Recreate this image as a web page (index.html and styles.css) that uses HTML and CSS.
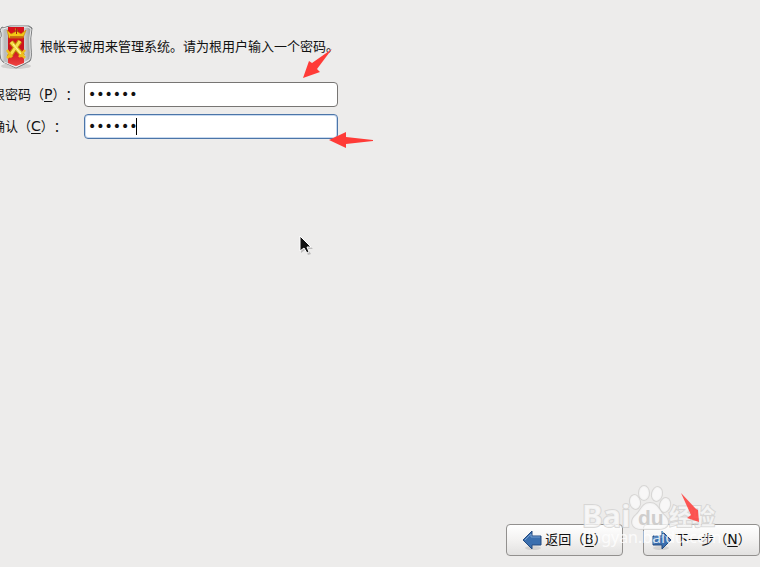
FILE: index.html
```html
<!DOCTYPE html>
<html lang="zh-CN">
<head>
<meta charset="utf-8">
<title>根密码</title>
<link rel="stylesheet" href="styles.css">
</head>
<body>
<form class="page">
  <header class="intro">
    <svg class="shield" width="36" height="46" viewBox="0 0 36 46" aria-hidden="true">
      <defs>
        <linearGradient id="silver" x1="0" y1="0" x2="1" y2="0"><stop offset="0" stop-color="#f4f4f4"/><stop offset=".15" stop-color="#b9babb"/><stop offset=".7" stop-color="#dededf"/><stop offset="1" stop-color="#8f9091"/></linearGradient>
        <linearGradient id="red" x1="0" y1="0" x2="0" y2="1"><stop offset="0" stop-color="#d8101c"/><stop offset=".6" stop-color="#c9141c"/><stop offset="1" stop-color="#f04340"/></linearGradient>
      </defs>
      <ellipse cx="16" cy="42" rx="15" ry="3" fill="#000" opacity=".12"/>
      <path d="M2 3Q4 5 6 3L10 2H29L32 4Q30 14 31 24T30 37Q23 41 16 44Q10 41 3 38Q0 36 0 30V14Q2 13 1 9L0 6Z" fill="url(#silver)" stroke="#77797a"/>
      <path d="M3 5L6 4Q10 3 12 3H28L31 5Q29 14 30 24T29 36L16 43L4 38" fill="none" stroke="#fff" opacity=".8"/>
      <path d="M8 3H24V39L16 42L8 39Z" fill="url(#red)"/>
      <path d="M7 6L11 10L15 8L16 4L18 8L21 10L26 6L23 14H9Z" fill="#f4c816" stroke="#c88b08" stroke-width=".7"/>
      <path d="M16.5 4V10M14 7H19M10 13H23" stroke="#a72513"/>
      <path d="M11 18L23 32M20 17L9 33" stroke="#bd8408" stroke-width="5"/>
      <path d="M11 18L23 32M20 17L9 33" stroke="#f7de4b" stroke-width="3"/>
      <path d="M7 26L12 33M25 26L19 33M7 34L10 31M25 34L22 31" stroke="#efbd1a" stroke-width="2.5"/>
      <path d="M13 20L21 30" stroke="#fff7a6"/>
    </svg>
    <p>根帐号被用来管理系统。请为根用户输入一个密码。</p>
  </header>
  <div class="fields">
    <label for="password">根密码（<u>P</u>）：</label>
    <div class="field"><input id="password" type="password" value="123456"></div>
    <label for="confirm">确认（<u>C</u>）：</label>
    <div class="field"><input id="confirm" class="active" type="password" value="123456"><span class="caret"></span></div>
  </div>
  <footer class="actions">
    <button type="button" accesskey="b">
      <svg width="20" height="22" viewBox="0 0 20 22" aria-hidden="true"><ellipse cx="11" cy="19" rx="8" ry="2" fill="#000" opacity=".1"/><path d="M1 11L10 2V7H19V16H10V20Z" fill="#3b6fae" stroke="#244b80"/><path d="M3 11L9 5V8H18" fill="none" stroke="#759dce"/></svg>
      <span>返回（<u>B</u>）</span>
    </button>
    <button type="button" accesskey="n">
      <svg width="20" height="22" viewBox="0 0 20 22" aria-hidden="true"><ellipse cx="9" cy="19" rx="8" ry="2" fill="#000" opacity=".1"/><path d="M19 11L10 2V7H1V16H10V20Z" fill="#3b6fae" stroke="#244b80"/><path d="M2 15V8H11V5L17 11" fill="none" stroke="#759dce"/></svg>
      <span>下一步（<u>N</u>）</span>
    </button>
  </footer>
</form>

<svg class="mark arrow-first" width="32" height="32" viewBox="0 0 32 32" aria-hidden="true"><path d="M30 1L15 21L18 24L1 30L7 13L10 15Z" fill="#ff3b37"/></svg>
<svg class="mark arrow-second" width="46" height="18" viewBox="0 0 46 18" aria-hidden="true"><path d="M0 9L17 1V6L44 9V10L17 13V17Z" fill="#ff3b37"/></svg>
<svg class="mark pointer" width="16" height="22" viewBox="0 0 16 22" aria-hidden="true"><path d="M2 3V18L6 15L9 20L12 19L9 14H14Z" fill="#000" opacity=".2"/><path d="M1 1V16L5 13L8 18L10 17L8 12H12Z" fill="#111" stroke="#fff"/></svg>
<svg class="mark watermark" width="140" height="70" viewBox="0 0 140 70" aria-hidden="true">
  <g class="stamp">
    <text class="brand" x="1" y="45">Bai</text>
    <ellipse cx="54" cy="20" rx="5" ry="7" transform="rotate(-12 54 20)"/>
    <ellipse cx="63" cy="11" rx="5" ry="7"/>
    <ellipse cx="76" cy="12" rx="5" ry="7" transform="rotate(12 76 12)"/>
    <ellipse cx="84" cy="23" rx="5" ry="7" transform="rotate(15 84 23)"/>
    <path d="M69 21C61 21 60 29 55 33C48 39 51 47 60 47H78C88 47 90 39 83 33C78 29 77 21 69 21Z"/>
    <text class="chinese" x="88" y="43">经验</text>
  </g>
  <text class="paw" x="57" y="43">du</text>
  <text class="url" x="2" y="61">jingyan.baidu.com</text>
</svg>
<svg class="mark arrow-next" width="22" height="32" viewBox="0 0 22 32" aria-hidden="true"><path d="M1 1L16 17L18 18L19 30L7 26L11 23Z" fill="#ff3b37" opacity=".85"/></svg>
</body>
</html>
```

FILE: styles.css
```css
* { box-sizing: border-box; }
body {
  margin: 0;
  background: #edeceb;
  color: #111;
  font: 13px/20px "DejaVu Sans", "Noto Sans CJK TC", sans-serif;
  text-spacing-trim: space-all;
  position: relative;
  overflow: hidden;
}
.page {
  min-height: 100vh;
  display: flex;
  flex-direction: column;
  padding: 24px 0 11px;
}
.intro {
  display: flex;
  align-items: center;
  gap: 4px;
  font-family: "Noto Sans CJK SC", sans-serif;
}
.intro p { margin: 0 0 2px; }
.shield { flex: none; }
.fields {
  display: grid;
  grid-template-columns: 92px minmax(0, 254px);
  row-gap: 7px;
  align-items: center;
  margin: 12px 0 0 -8px;
}
label { white-space: nowrap; }
u { font-size: 14px; line-height: 1; text-underline-offset: 2px; }
.field { position: relative; }
input {
  display: block;
  width: 100%;
  height: 25px;
  padding: 0 3px 2px;
  border: 1px solid #777573;
  border-radius: 4px;
  background: #fff;
  color: #111;
  font: 14px/20px "DejaVu Sans", sans-serif;
  outline: 0;
}
.active {
  border-color: #4c75a8;
  box-shadow: inset 0 0 0 1px #c8daf0;
}
.caret {
  position: absolute;
  left: 52px;
  top: 4px;
  width: 1px;
  height: 17px;
  background: #000;
}
.actions {
  display: flex;
  justify-content: flex-end;
  gap: 20px;
  margin-top: auto;
}
button {
  display: flex;
  align-items: center;
  justify-content: center;
  gap: 3px;
  width: 117px;
  height: 32px;
  padding: 0;
  border: 1px solid #92908e;
  border-radius: 4px;
  background: linear-gradient(#fff, #f3f2f1 50%, #e2e1e0);
  color: #111;
  font: inherit;
  text-spacing-trim: inherit;
  white-space: nowrap;
}
.mark { position: absolute; pointer-events: none; }
.arrow-first { left: 302px; top: 48px; }
.arrow-second { left: 329px; top: 131px; }
.pointer { left: 299px; top: 235px; }
.arrow-next { right: 58px; bottom: 43px; }
.watermark { right: 39px; bottom: 15px; }
.stamp {
  fill: #fafafa;
  fill-opacity: .8;
  stroke: #d2d1d0;
  stroke-opacity: .8;
  stroke-width: 2px;
  paint-order: stroke;
}
.brand { font: bold 31px "Noto Sans", sans-serif; }
.chinese { font: bold 23px "Noto Sans CJK SC", sans-serif; }
.paw { font: bold 21px "Liberation Sans", sans-serif; fill: #cfcecd; }
.url { font: 16px "Noto Sans", sans-serif; fill: #fff; fill-opacity: .8; }
```
